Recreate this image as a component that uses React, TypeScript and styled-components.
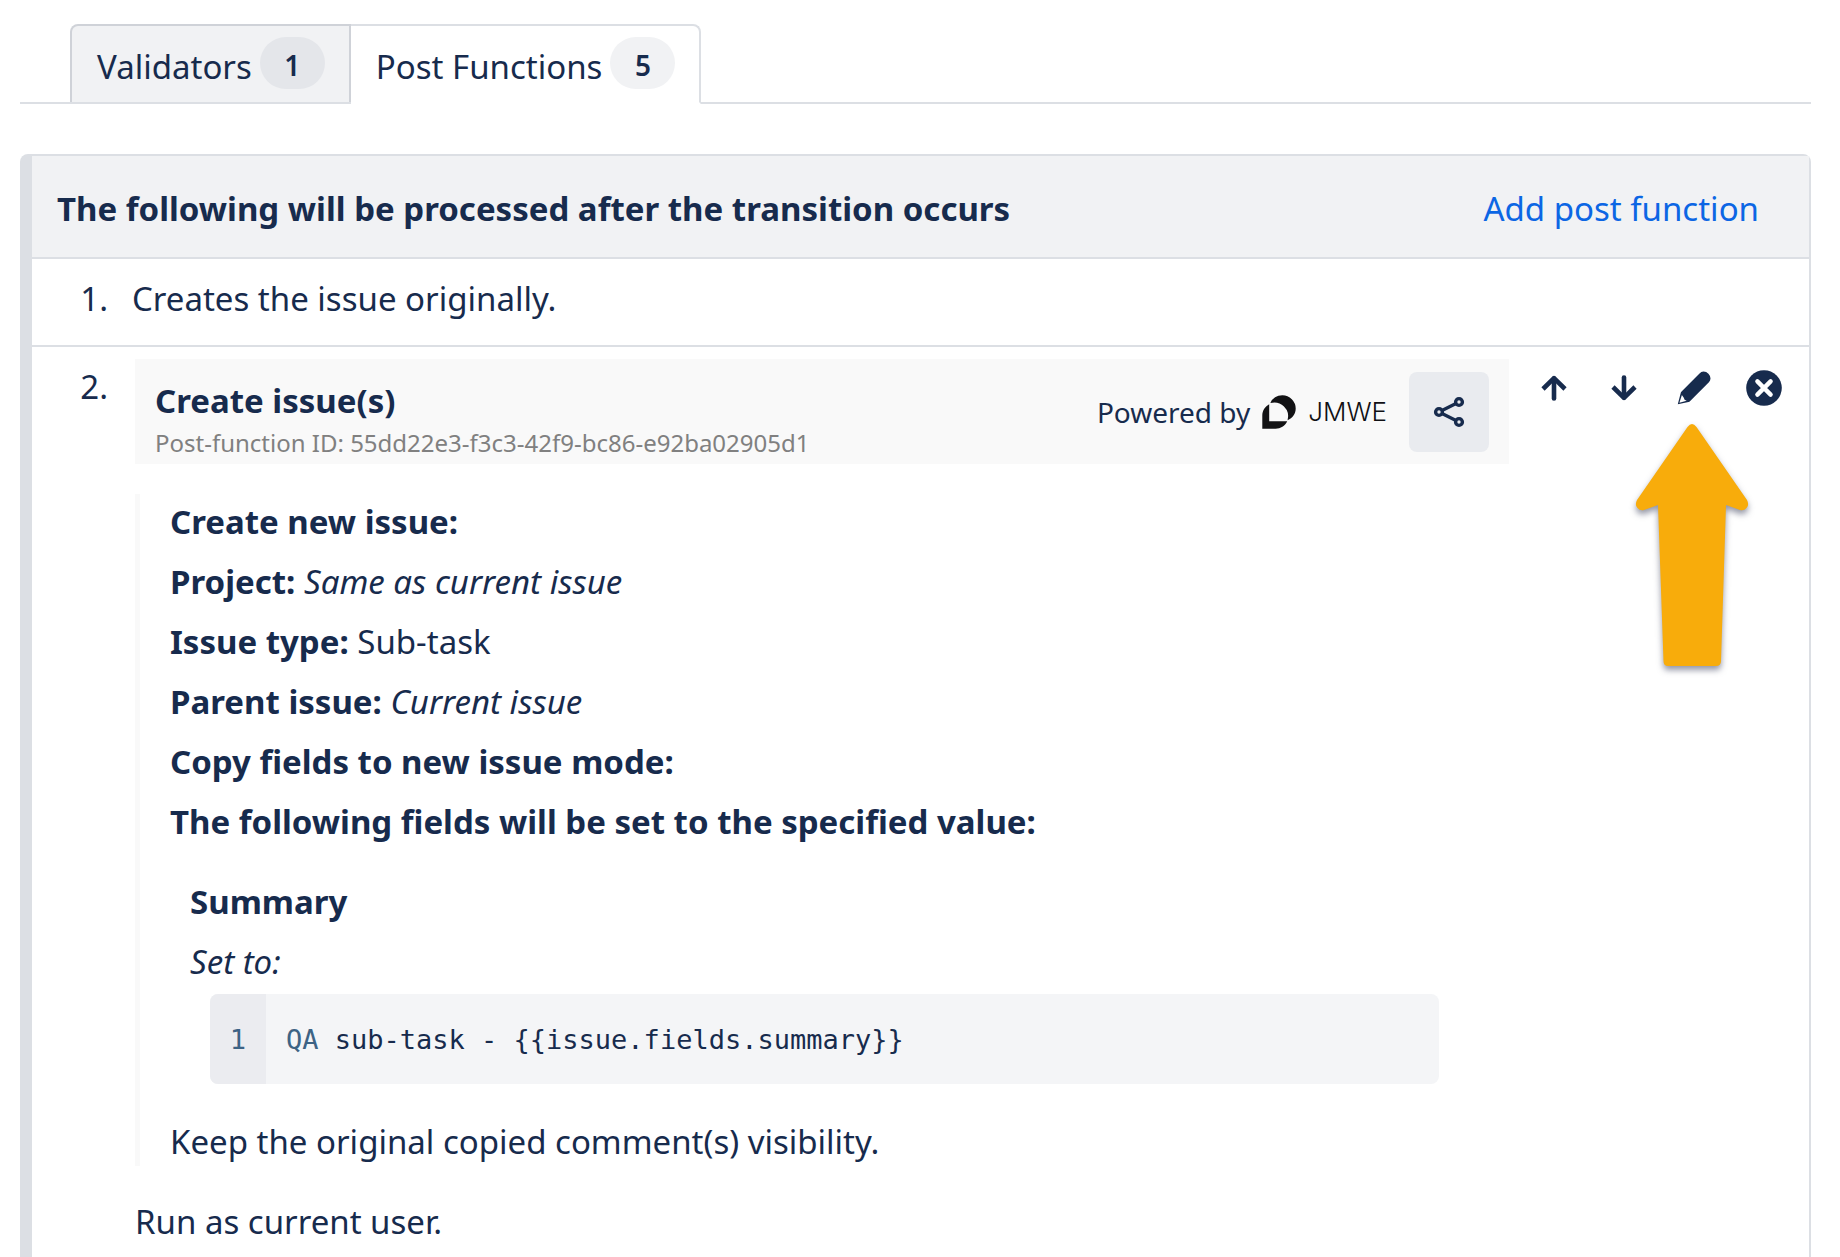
import React from "react";
import styled, { createGlobalStyle } from "styled-components";

const color = {
  ink: "#172b4d",
  line: "#dcdfe4",
  surface: "#f1f2f4",
  pale: "#f9f9f9",
  link: "#0c66e4",
};

const GlobalStyle = createGlobalStyle`
  *, *::before, *::after { box-sizing: border-box; }
  body {
    margin: 0;
    background: #fff;
    color: ${color.ink};
    font: 33px/48px "Noto Sans", "Open Sans", sans-serif;
    overflow-x: hidden;
  }
  h2, h3, h4, p, ol, pre { margin: 0; padding: 0; font: inherit; }
  button { font: inherit; color: inherit; cursor: pointer; }
`;

const Page = styled.main`
  display: flex;
  flex-direction: column;
  min-height: 100vh;
  padding: 24px 29px 0 20px;
`;

const TabStrip = styled.div`
  display: flex;
  padding-left: 50px;
  margin-bottom: 50px;
  border-bottom: 2px solid ${color.line};
`;

const Tab = styled.button<{ $active?: boolean }>`
  display: flex;
  align-items: flex-start;
  gap: 8px;
  padding: 11px 24px 11px 25px;
  margin: 0 0 ${(p) => (p.$active ? "-2px" : "0")};
  background: ${(p) => (p.$active ? "#fff" : color.surface)};
  border: 2px solid ${(p) => (p.$active ? color.line : "#cfd2d8")};
  border-left-width: ${(p) => (p.$active ? "0" : "2px")};
  border-bottom: ${(p) => (p.$active ? "2px solid #fff" : "0")};
  border-radius: ${(p) => (p.$active ? "0 8px 0 0" : "8px 0 0 0")};
`;

const TabLabel = styled.span`
  padding-top: 6px;
`;

const Badge = styled.span<{ $active?: boolean }>`
  width: 65px;
  height: 52px;
  padding-top: 2px;
  border-radius: 26px;
  background: ${(p) => (p.$active ? color.surface : "#e4e6ea")};
  font-size: 28px;
  font-weight: 600;
  line-height: 52px;
  text-align: center;
`;

const Panel = styled.section`
  flex: 1;
  border: 2px solid ${color.line};
  border-left-width: 12px;
  border-bottom: 0;
  border-radius: 8px 8px 0 0;
`;

const PanelHeader = styled.header`
  display: flex;
  justify-content: space-between;
  padding: 29px 50px 24px 25px;
  background: ${color.surface};
  border-bottom: 2px solid ${color.line};
`;

const PanelTitle = styled.h2`
  && { font-weight: 700; }
`;

const AddLink = styled.a`
  color: ${color.link};
  text-decoration: none;
`;

const FunctionList = styled.ol`
  list-style: none;
`;

const FunctionRow = styled.li`
  display: grid;
  grid-template-columns: 76px minmax(0, 1fr) auto;
  column-gap: 24px;
  padding: 12px 25px 22px 0;
  & + & { border-top: 2px solid ${color.line}; }
`;

const RowNumber = styled.span`
  padding-top: 4px;
  text-align: right;
`;

const RowText = styled.p`
  && { padding-top: 4px; }
`;

const FunctionDetail = styled.div`
  padding-left: 3px;
`;

const FunctionHeader = styled.div`
  display: flex;
  align-items: center;
  justify-content: space-between;
  padding: 0 20px;
  background: ${color.pale};
`;

const FunctionTitles = styled.div`
  padding: 18px 0 4px;
`;

const FunctionTitle = styled.h3`
  && { font-weight: 700; }
`;

const FunctionId = styled.p`
  && {
    margin-top: 1px;
    color: #808080;
    font-size: 24px;
    line-height: 34px;
  }
`;

const Brand = styled.div`
  display: flex;
  align-items: center;
  gap: 12px;
  font-size: 28px;
`;

const BrandName = styled.span`
  color: #101014;
  font: 300 26px/46px Inter, sans-serif;
`;

const ShareButton = styled.button`
  display: grid;
  place-items: center;
  width: 80px;
  height: 80px;
  margin-left: 10px;
  padding: 0;
  border: 0;
  border-radius: 8px;
  background: #e9ebef;
`;

const FunctionBody = styled.div`
  display: flex;
  flex-direction: column;
  gap: 12px;
  margin: 30px 0 32px;
  padding: 4px 30px 0;
  border-left: 5px solid ${color.pale};
`;

const FieldBlock = styled.div`
  display: flex;
  flex-direction: column;
  gap: 12px;
  padding: 20px 20px 22px;
`;

const FieldName = styled.h4`
  && { font-weight: 700; }
`;

const CodeBlock = styled.pre`
  && {
    display: flex;
    margin: -4px 20px 0;
    border-radius: 8px;
    background: #f4f5f7;
    overflow: hidden;
    font: 27px/88px "DejaVu Sans Mono", "Liberation Mono", monospace;
  }
`;

const LineNumber = styled.span`
  width: 56px;
  padding-top: 2px;
  background: #ebecf0;
  color: #3d6385;
  text-align: center;
`;

const Code = styled.code`
  padding: 2px 0 0 20px;
  font: inherit;
`;

const CodeKeyword = styled.span`
  color: #3d6385;
`;

const Actions = styled.div`
  position: relative;
  display: flex;
  align-items: flex-start;
  gap: 30px;
  padding: 9px 0 0 1px;
`;

const IconButton = styled.button`
  display: grid;
  place-items: center;
  width: 40px;
  height: 40px;
  padding: 0;
  border: 0;
  background: none;
`;

const Pointer = styled.svg`
  position: absolute;
  top: 55px;
  right: 26px;
  width: 132px;
  height: 270px;
  pointer-events: none;
  filter: drop-shadow(0 4px 3px rgba(40, 45, 75, 0.5));
`;

const ArrowUp = () => (
  <svg width="26" height="26" viewBox="0 0 26 26" fill="none" stroke={color.ink} strokeWidth="4.6" aria-hidden="true">
    <path d="M13 3.5V23.5" strokeLinecap="round" />
    <path d="M2 14 13 3.2 24 14" strokeLinejoin="round" />
  </svg>
);

const ArrowDown = () => (
  <svg width="26" height="26" viewBox="0 0 26 26" fill="none" stroke={color.ink} strokeWidth="4.6" aria-hidden="true">
    <path d="M13 22.5V2.5" strokeLinecap="round" />
    <path d="M2 12 13 22.8 24 12" strokeLinejoin="round" />
  </svg>
);

const Pencil = () => (
  <svg width="34" height="34" viewBox="0 0 34 34" aria-hidden="true">
    <path
      fill={color.ink}
      d="M22.500 2.400a5.600 5.600 0 0 1 4-1.800 7 7 0 0 1 7 7 5.600 5.600 0 0 1-1.600 3.600L13.200 29.900a3.500 3.500 0 0 1-1.700 1L.8 33.200 3.600 22.500a3.500 3.500 0 0 1 1-1.900Z"
    />
    <path fill="#fff" d="M4.900 24 2.400 31.700 9.700 29.800 7.600 28.800 6.800 26.700Z" />
  </svg>
);

const Close = () => (
  <svg width="36" height="36" viewBox="0 0 36 36" aria-hidden="true">
    <circle cx="18" cy="18" r="17.8" fill={color.ink} />
    <path d="M11.4 11.4 24.6 24.6M24.6 11.4 11.4 24.6" stroke="#fff" strokeWidth="4.4" strokeLinecap="round" />
  </svg>
);

const Share = () => (
  <svg width="32" height="32" viewBox="0 0 32 32" fill="none" stroke={color.ink} strokeWidth="3.4" aria-hidden="true">
    <circle cx="6" cy="16" r="3.4" />
    <circle cx="26" cy="6" r="3.4" />
    <circle cx="26" cy="26" r="3.4" />
    <path d="M9 14.500 23 7.500M9 17.500 23 24.500" />
  </svg>
);

const JmweLogo = () => (
  <svg width="34" height="34" viewBox="0 0 34 34" aria-hidden="true">
    <path fill="#121214" d="M8.300 8A13.300 13.300 0 0 1 20.400.300 13.300 13.300 0 0 1 33.700 13.600C33.700 18.800 30.600 23.300 25.600 25.200A14 14 0 0 0 8.300 8Z" />
    <path fill="#121214" d="M7.200 9.200V26.300H25.200C23 31 18.600 33.800 13.600 33.800H.300V20.500C.300 15.600 3.200 11.300 7.200 9.200Z" />
  </svg>
);

const summary = [
  { label: "Create new issue:" },
  { label: "Project:", value: <em>Same as current issue</em> },
  { label: "Issue type:", value: "Sub-task" },
  { label: "Parent issue:", value: <em>Current issue</em> },
  { label: "Copy fields to new issue mode:" },
  { label: "The following fields will be set to the specified value:" },
];

export default function App() {
  return (
    <Page>
      <GlobalStyle />
      <TabStrip role="tablist">
        <Tab type="button" role="tab" aria-selected={false}>
          <TabLabel>Validators</TabLabel>
          <Badge>1</Badge>
        </Tab>
        <Tab type="button" role="tab" aria-selected $active>
          <TabLabel>Post Functions</TabLabel>
          <Badge $active>5</Badge>
        </Tab>
      </TabStrip>

      <Panel>
        <PanelHeader>
          <PanelTitle>The following will be processed after the transition occurs</PanelTitle>
          <AddLink href="#add">Add post function</AddLink>
        </PanelHeader>
        <FunctionList>
          <FunctionRow>
            <RowNumber>1.</RowNumber>
            <RowText>Creates the issue originally.</RowText>
          </FunctionRow>
          <FunctionRow>
            <RowNumber>2.</RowNumber>
            <FunctionDetail>
              <FunctionHeader>
                <FunctionTitles>
                  <FunctionTitle>Create issue(s)</FunctionTitle>
                  <FunctionId>Post-function ID: 55dd22e3-f3c3-42f9-bc86-e92ba02905d1</FunctionId>
                </FunctionTitles>
                <Brand>
                  <span>Powered by</span>
                  <JmweLogo />
                  <BrandName>JMWE</BrandName>
                  <ShareButton type="button" aria-label="Share">
                    <Share />
                  </ShareButton>
                </Brand>
              </FunctionHeader>
              <FunctionBody>
                {summary.map((item) => (
                  <p key={item.label}>
                    <strong>{item.label}</strong> {item.value}
                  </p>
                ))}
                <FieldBlock>
                  <FieldName>Summary</FieldName>
                  <p>
                    <em>Set to:</em>
                  </p>
                  <CodeBlock>
                    <LineNumber>1</LineNumber>
                    <Code>
                      <CodeKeyword>QA</CodeKeyword>
                      {" sub-task - {{issue.fields.summary}}"}
                    </Code>
                  </CodeBlock>
                </FieldBlock>
                <p>Keep the original copied comment(s) visibility.</p>
              </FunctionBody>
              <p>Run as current user.</p>
            </FunctionDetail>
            <Actions>
              <IconButton type="button" aria-label="Move up">
                <ArrowUp />
              </IconButton>
              <IconButton type="button" aria-label="Move down">
                <ArrowDown />
              </IconButton>
              <IconButton type="button" aria-label="Edit">
                <Pencil />
              </IconButton>
              <IconButton type="button" aria-label="Delete">
                <Close />
              </IconButton>
              <Pointer viewBox="0 0 132 270" aria-hidden="true">
                <path
                  fill="#f8ac0b"
                  d="M61.500 13Q66 7 70.500 13L121 86Q123.500 91 120.500 94 118 97 114 96L100 91 95 247Q95 252 90 252H42Q37.500 252 37.500 247L32 91 18 96Q14 97 11.500 94 8.500 91 11 86Z"
                />
              </Pointer>
            </Actions>
          </FunctionRow>
        </FunctionList>
      </Panel>
    </Page>
  );
}
